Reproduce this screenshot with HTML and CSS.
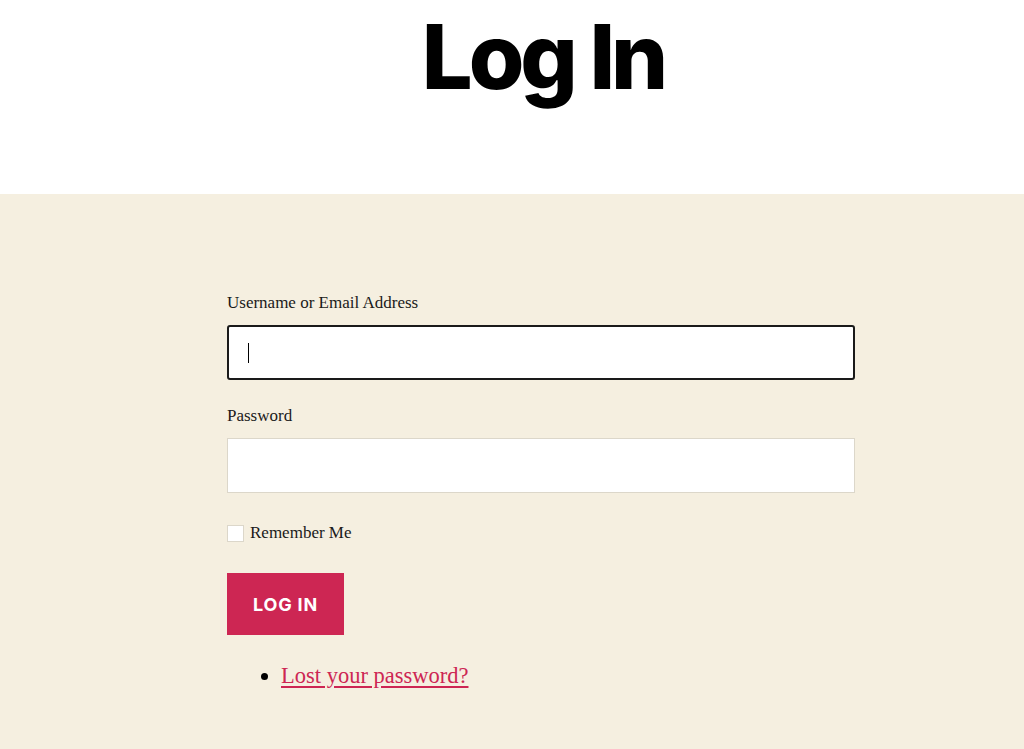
FILE: index.html
```html
<!DOCTYPE html>
<html>
<head>
<meta charset="utf-8">
<link rel="stylesheet" href="styles.css">
</head>
<body>
<header class="hero">
  <h1 class="title">Log In</h1>
</header>
<main class="content">
  <form class="login-form">
    <div class="field">
      <label class="label">Username or Email Address</label>
      <div class="input input-focus"><span class="caret"></span></div>
    </div>
    <div class="field">
      <label class="label">Password</label>
      <div class="input"></div>
    </div>
    <div class="remember">
      <span class="checkbox"></span>
      <span class="remember-text">Remember Me</span>
    </div>
    <button type="button" class="btn">LOG IN</button>
  </form>
  <ul class="links">
    <li><a href="#" class="link">Lost your password?</a></li>
  </ul>
</main>
</body>
</html>
```

FILE: styles.css
```css
html, body {
  margin: 0;
  padding: 0;
}
body {
  background: #f5efe0;
  font-family: "Liberation Serif", "Times New Roman", serif;
  color: #000;
  height: 749px;
  overflow: hidden;
}
.hero {
  background: #fff;
  height: 194px;
  display: flex;
  justify-content: center;
  box-sizing: border-box;
  padding-top: 3px;
  padding-left: 62px;
}
.title {
  margin: 0;
  font-family: Inter, "Noto Sans", sans-serif;
  font-weight: 800;
  font-size: 90px;
  letter-spacing: -0.045em;
  line-height: 1.2;
}
.content {
  width: 628px;
  margin-left: 227px;
  padding-top: 100px;
}
.login-form {
  display: flex;
  flex-direction: column;
}
.field {
  display: flex;
  flex-direction: column;
  margin-bottom: 27px;
}
.field + .field {
  margin-bottom: 30px;
}
.label {
  font-size: 17px;
  line-height: 18px;
  color: #1a1a1a;
  margin-bottom: 13px;
}
.input {
  height: 55px;
  box-sizing: border-box;
  background: #fff;
  border: 1px solid #dcd7ca;
  display: flex;
  align-items: center;
}
.input-focus {
  border: 2px solid #1a1a1a;
  border-radius: 3px;
  padding-left: 19px;
}
.caret {
  width: 1px;
  height: 20px;
  background: #000;
}
.remember {
  display: flex;
  align-items: center;
  gap: 6px;
  margin-bottom: 30px;
}
.checkbox {
  width: 15px;
  height: 15px;
  background: #fff;
  border: 1px solid #dcd7ca;
  display: block;
}
.remember-text {
  font-size: 17px;
  color: #1a1a1a;
}
.btn {
  align-self: flex-start;
  width: 117px;
  height: 62px;
  background: #cd2653;
  color: #fff;
  border: none;
  font-family: Inter, "Noto Sans", sans-serif;
  font-weight: 700;
  font-size: 18px;
  letter-spacing: 0.045em;
  padding: 0;
}
.links {
  margin: 28px 0 0;
  padding-left: 54px;
  font-size: 22.5px;
}
.link {
  color: #cd2653;
  text-decoration: underline;
  text-underline-offset: 3px;
}
```
